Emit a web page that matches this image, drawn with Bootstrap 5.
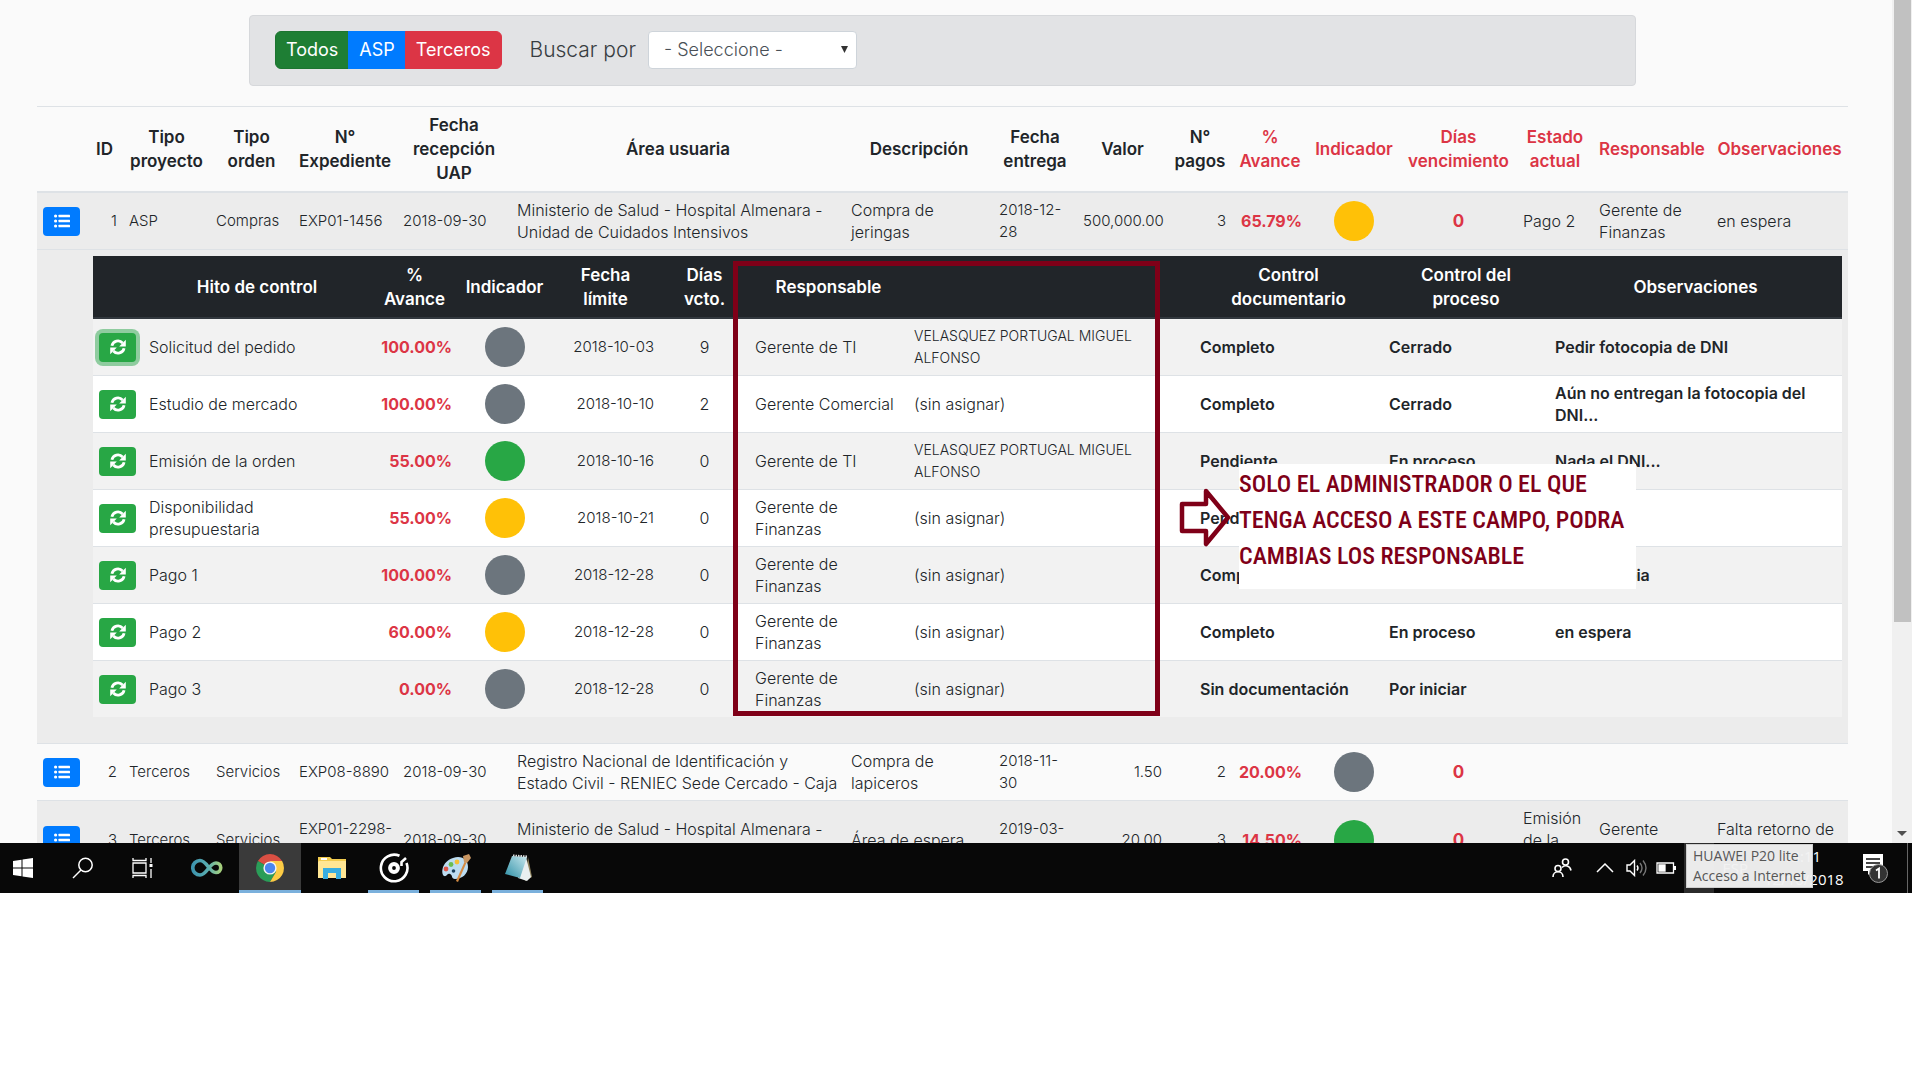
<!DOCTYPE html>
<html lang="es">
<head>
<meta charset="utf-8">
<meta name="viewport" content="width=device-width, initial-scale=1">
<title>Expedientes</title>
<link href="https://cdn.jsdelivr.net/npm/bootstrap@5.3.0/dist/css/bootstrap.min.css" rel="stylesheet">
<script src="https://cdn.jsdelivr.net/npm/bootstrap@5.3.0/dist/js/bootstrap.bundle.min.js"></script>
<style>
  body{font-family:Inter,"Open Sans",sans-serif;font-size:16px;font-weight:300;line-height:22px;color:#212529;background:#fff;padding:0 8px 187px 0}
  .browser{min-height:0;background:#fafafa}
  .page-body{padding:15px 44px 0 37px}
  .filter-bar{max-width:1387px;height:71px;margin-bottom:20px;padding:0 25px 2px;background:#e2e3e5;border:1px solid #d6d8db;border-radius:4px;font-size:21px;color:#383d41}
  .filter-bar .btn{height:38px;padding:0 10px;font-size:18px;line-height:36px;color:#fff;border-width:1px}
  .b-green{background:#1e7e34;border-color:#1c7430}
  .b-blue{background:#007bff;border-color:#007bff}
  .b-red{background:#dc3545;border-color:#dc3545}
  .picker{position:relative;width:209px}
  .picker select{display:block;width:100%;height:38px;padding:0 15px;font-size:18px;font-weight:300;color:#495057;background:#fff;border:1px solid #ced4da;border-radius:4px;appearance:none}
  .picker svg{position:absolute;right:9px;top:15px;pointer-events:none}

  .grid{--bs-table-bg:transparent;width:100%;margin:0;table-layout:fixed;border-collapse:separate;border-spacing:0;white-space:nowrap;color:#212529}
  .grid>:not(caption)>*>*{padding:6px;border:0;border-top:1px solid #dee2e6;box-shadow:none;background:transparent;vertical-align:middle;color:inherit}
  .grid>thead>tr>th{border-bottom:2px solid #dee2e6;font-size:17px;font-weight:600;line-height:24px;text-align:center}
  .grid>thead>tr>th.hot{color:#dc3545}
  .grid>tbody>tr:first-child>td{border-top:0}
  .grid>tbody>tr.shade{background:#ececec}
  .files>tbody>tr>td:nth-child(-n+6),.files>tbody>tr>td:nth-child(9){font-size:15px}
  .grid .num{text-align:right;font-size:15px}
  .grid .mid{text-align:center}
  .grid .pct{text-align:right;font-weight:700;color:#dc3545;font-size:16px}
  .grid .hotnum{text-align:center;font-size:17px;font-weight:700;color:#dc3545}
  .steps{background:#fff}
  .steps>thead>tr{background:#212529;color:#fff}
  .steps>thead>tr>th{border-top-color:#212529;border-bottom-color:#32383e}
  .steps>tbody>tr>td{font-size:16px}
  .steps>tbody>tr:nth-child(odd){background:#f2f2f2}
  .steps .strong{font-weight:600}
  .steps>tbody>tr>td.person{font-size:14px}
  .grid>tbody>tr>td.holder{padding:6px 6px 26px 7px}

  .dot{display:block;width:40px;height:40px;margin:2px auto;border-radius:50%}
  .d-amber{background:#ffc107}.d-grey{background:#6c757d}.d-green{background:#28a745}
  .act{display:flex;align-items:center;justify-content:center;width:37px;height:29px;padding:0;border:0;border-radius:4px;color:#fff}
  .act.go{background:#28a745}
  .act.list{background:#007bff}
  .act.held{box-shadow:0 0 0 4px #8fcc9f}

  .mark-frame{position:absolute;left:640px;top:5px;width:427px;height:455px;border:5px solid #7f0018;pointer-events:none}
  .mark-arrow{position:absolute;left:1086px;top:230px}
  .mark-note{position:absolute;left:1146px;top:208px;width:397px;height:125px;padding-top:2px;background:#fff;color:#7f0018;font:500 24px/36px "Roboto Condensed",Roboto,sans-serif;white-space:nowrap}

  .scroller{width:20px;background:#f0f0f0}
  .thumb{width:17px;flex:0 0 622px;background:#c1c1c1}

  .taskbar{position:relative;height:50px;background:#080808}
  .taskbar::after{content:"";position:absolute;right:4px;top:0;width:1px;height:50px;background:#666}
  .app{display:flex;align-items:center;justify-content:center;width:62px;height:50px;padding:0;background:none;border:0}
  .app.on{background:#3a3a3a;border-bottom:3px solid #7ab0dc;padding-top:3px}
  .app.open{width:51px;margin:0 6px 0 5px;border-bottom:3px solid #7ab0dc;padding-top:3px}
  .tray{color:#fff;font-family:"Open Sans",sans-serif;font-weight:400;font-size:15px}
  .clock{text-align:center;width:76px;line-height:23px}
  .wifi-slot{width:30px;height:50px;background:#2b2b2b}
  .net-tip{position:absolute;right:99px;top:1px;width:127px;height:44px;padding:1px 6px;background:rgba(242,242,242,.97);border:1px solid #cfcfcf;color:#575757;font:400 14px/20px "Open Sans",sans-serif;white-space:nowrap}
</style>
</head>
<body class="d-flex flex-column vh-100 overflow-hidden">

<svg width="0" height="0" class="position-absolute" aria-hidden="true">
  <symbol id="i-sync" viewBox="0 0 16 16"><g fill="none" stroke="currentColor" stroke-width="2.800"><path d="M1.900 6.800A6.200 6.200 0 0 1 12.600 4M14.100 9.200A6.200 6.200 0 0 1 3.400 12"/></g><path fill="currentColor" d="M15.800 .8v6.600H9.200zM.2 15.200V8.600h6.600z"/></symbol>
  <symbol id="i-list" viewBox="0 0 16 14"><g fill="currentColor"><circle cx="1.600" cy="2" r="1.600"/><circle cx="1.600" cy="7" r="1.600"/><circle cx="1.600" cy="12" r="1.600"/><rect x="4.500" y=".7" width="11.500" height="2.600" rx=".5"/><rect x="4.500" y="5.700" width="11.500" height="2.600" rx=".5"/><rect x="4.500" y="10.700" width="11.500" height="2.600" rx=".5"/></g></symbol>
</svg>

<div class="browser d-flex flex-grow-1 overflow-hidden">
  <main class="page-body flex-grow-1">
    <div class="filter-bar d-flex align-items-center mx-auto">
      <div class="btn-group" role="group" aria-label="Tipo de proyecto">
        <button type="button" class="btn b-green">Todos</button>
        <button type="button" class="btn b-blue">ASP</button>
        <button type="button" class="btn b-red">Terceros</button>
      </div>
      <label for="criterio" class="ms-4 ps-1 me-2 pe-1">Buscar por</label>
      <div class="picker">
        <select id="criterio"><option>- Seleccione -</option></select>
        <svg width="7" height="8" viewBox="0 0 7 8"><path d="M0 0h7L3.500 7z" fill="#333"/></svg>
      </div>
    </div>

    <table class="table grid files">
      <colgroup><col style="width:49px"><col style="width:37px"><col style="width:87px"><col style="width:83px"><col style="width:104px"><col style="width:114px"><col style="width:334px"><col style="width:148px"><col style="width:84px"><col style="width:91px"><col style="width:64px"><col style="width:76px"><col style="width:92px"><col style="width:117px"><col style="width:76px"><col style="width:118px"><col style="width:137px"></colgroup>
      <thead><tr>
        <th></th><th>ID</th><th>Tipo<br>proyecto</th><th>Tipo<br>orden</th><th>N°<br>Expediente</th><th>Fecha<br>recepción<br>UAP</th><th>Área usuaria</th><th>Descripción</th><th>Fecha<br>entrega</th><th>Valor</th><th>N°<br>pagos</th>
        <th class="hot">%<br>Avance</th><th class="hot">Indicador</th><th class="hot">Días<br>vencimiento</th><th class="hot">Estado<br>actual</th><th class="hot">Responsable</th><th class="hot">Observaciones</th>
      </tr></thead>
      <tbody>
        <tr class="shade">
          <td><button type="button" class="act list" aria-label="Detalle"><svg width="16" height="14"><use href="#i-list"/></svg></button></td>
          <td class="num">1</td><td>ASP</td><td>Compras</td><td>EXP01-1456</td><td>2018-09-30</td>
          <td>Ministerio de Salud - Hospital Almenara -<br>Unidad de Cuidados Intensivos</td><td>Compra de<br>jeringas</td><td>2018-12-<br>28</td>
          <td class="num">500,000.00</td><td class="num">3</td><td class="pct">65.79%</td><td><span class="dot d-amber"></span></td><td class="hotnum">0</td><td>Pago 2</td><td>Gerente de<br>Finanzas</td><td>en espera</td>
        </tr>
        <tr class="shade">
          <td></td>
          <td colspan="16" class="holder"><div class="position-relative">
            <table class="table grid steps">
              <colgroup><col style="width:50px"><col style="width:228px"><col style="width:87px"><col style="width:93px"><col style="width:109px"><col style="width:89px"><col style="width:159px"><col style="width:286px"><col style="width:189px"><col style="width:166px"><col style="width:293px"></colgroup>
              <thead><tr><th></th><th>Hito de control</th><th>%<br>Avance</th><th>Indicador</th><th>Fecha<br>límite</th><th>Días<br>vcto.</th><th>Responsable</th><th></th><th>Control<br>documentario</th><th>Control del<br>proceso</th><th>Observaciones</th></tr></thead>
              <tbody>
                <tr><td><button type="button" class="act go held" aria-label="Actualizar"><svg width="16" height="16"><use href="#i-sync"/></svg></button></td><td>Solicitud del pedido</td><td class="pct">100.00%</td><td><span class="dot d-grey"></span></td><td class="num">2018-10-03</td><td class="mid">9</td><td>Gerente de TI</td><td class="person">VELASQUEZ PORTUGAL MIGUEL<br>ALFONSO</td><td class="strong">Completo</td><td class="strong">Cerrado</td><td class="strong">Pedir fotocopia de DNI</td></tr>
                <tr><td><button type="button" class="act go" aria-label="Actualizar"><svg width="16" height="16"><use href="#i-sync"/></svg></button></td><td>Estudio de mercado</td><td class="pct">100.00%</td><td><span class="dot d-grey"></span></td><td class="num">2018-10-10</td><td class="mid">2</td><td>Gerente Comercial</td><td>(sin asignar)</td><td class="strong">Completo</td><td class="strong">Cerrado</td><td class="strong">Aún no entregan la fotocopia del<br>DNI...</td></tr>
                <tr><td><button type="button" class="act go" aria-label="Actualizar"><svg width="16" height="16"><use href="#i-sync"/></svg></button></td><td>Emisión de la orden</td><td class="pct">55.00%</td><td><span class="dot d-green"></span></td><td class="num">2018-10-16</td><td class="mid">0</td><td>Gerente de TI</td><td class="person">VELASQUEZ PORTUGAL MIGUEL<br>ALFONSO</td><td class="strong">Pendiente</td><td class="strong">En proceso</td><td class="strong">Nada el DNI...</td></tr>
                <tr><td><button type="button" class="act go" aria-label="Actualizar"><svg width="16" height="16"><use href="#i-sync"/></svg></button></td><td>Disponibilidad<br>presupuestaria</td><td class="pct">55.00%</td><td><span class="dot d-amber"></span></td><td class="num">2018-10-21</td><td class="mid">0</td><td>Gerente de<br>Finanzas</td><td>(sin asignar)</td><td class="strong">Pendiente</td><td></td><td></td></tr>
                <tr><td><button type="button" class="act go" aria-label="Actualizar"><svg width="16" height="16"><use href="#i-sync"/></svg></button></td><td>Pago 1</td><td class="pct">100.00%</td><td><span class="dot d-grey"></span></td><td class="num">2018-12-28</td><td class="mid">0</td><td>Gerente de<br>Finanzas</td><td>(sin asignar)</td><td class="strong">Completo</td><td></td><td class="strong">Enviar copia</td></tr>
                <tr><td><button type="button" class="act go" aria-label="Actualizar"><svg width="16" height="16"><use href="#i-sync"/></svg></button></td><td>Pago 2</td><td class="pct">60.00%</td><td><span class="dot d-amber"></span></td><td class="num">2018-12-28</td><td class="mid">0</td><td>Gerente de<br>Finanzas</td><td>(sin asignar)</td><td class="strong">Completo</td><td class="strong">En proceso</td><td class="strong">en espera</td></tr>
                <tr><td><button type="button" class="act go" aria-label="Actualizar"><svg width="16" height="16"><use href="#i-sync"/></svg></button></td><td>Pago 3</td><td class="pct">0.00%</td><td><span class="dot d-grey"></span></td><td class="num">2018-12-28</td><td class="mid">0</td><td>Gerente de<br>Finanzas</td><td>(sin asignar)</td><td class="strong">Sin documentación</td><td class="strong">Por iniciar</td><td></td></tr>
              </tbody>
            </table>
            <div class="mark-frame"></div>
            <div class="mark-note">SOLO EL ADMINISTRADOR O EL QUE<br>TENGA ACCESO A ESTE CAMPO, PODRA<br>CAMBIAS LOS RESPONSABLE</div>
            <svg class="mark-arrow" width="54" height="63" viewBox="0 0 54 63"><path d="M3 18h24V5l22 26.500L27 58V45H3z" fill="none" stroke="#7f0018" stroke-width="4.500" stroke-linejoin="round"/></svg>
          </div></td>
        </tr>
        <tr>
          <td><button type="button" class="act list" aria-label="Detalle"><svg width="16" height="14"><use href="#i-list"/></svg></button></td>
          <td class="num">2</td><td>Terceros</td><td>Servicios</td><td>EXP08-8890</td><td>2018-09-30</td>
          <td>Registro Nacional de Identificación y<br>Estado Civil - RENIEC Sede Cercado - Caja</td><td>Compra de<br>lapiceros</td><td>2018-11-<br>30</td>
          <td class="num">1.50</td><td class="num">2</td><td class="pct">20.00%</td><td><span class="dot d-grey"></span></td><td class="hotnum">0</td><td></td><td></td><td></td>
        </tr>
        <tr class="shade">
          <td><button type="button" class="act list" aria-label="Detalle"><svg width="16" height="14"><use href="#i-list"/></svg></button></td>
          <td class="num">3</td><td>Terceros</td><td>Servicios</td><td>EXP01-2298-<br>&nbsp;</td><td>2018-09-30</td>
          <td>Ministerio de Salud - Hospital Almenara -<br>&nbsp;</td><td>Área de espera</td><td>2019-03-<br>&nbsp;</td>
          <td class="num">20.00</td><td class="num">3</td><td class="pct">14.50%</td><td><span class="dot d-green"></span></td><td class="hotnum">0</td><td>Emisión<br>de la<br>&nbsp;</td><td>Gerente<br>&nbsp;</td><td>Falta retorno de<br>&nbsp;</td>
        </tr>
      </tbody>
    </table>
  </main>
  <div class="scroller d-flex flex-column align-items-center flex-shrink-0">
    <div class="thumb"></div>
    <svg class="mt-auto mb-1" width="10" height="9" viewBox="0 0 10 9"><path d="M0 1h10L5 6z" fill="#505050"/></svg>
  </div>
</div>

<footer class="taskbar d-flex align-items-center flex-shrink-0">
  <button type="button" class="app" aria-label="Inicio" style="width:46px"><svg width="20" height="20" viewBox="0 0 20 20" fill="#fff"><path d="M0 3l8.500-1.200v7.700H0zM9.500 1.600L20 0v9.500H9.500zM0 10.500h8.500v7.700L0 17zM9.500 10.500H20V20L9.500 18.400z"/></svg></button>
  <button type="button" class="app ms-1" aria-label="Buscar" style="width:66px"><svg width="22" height="22" viewBox="0 0 22 22" fill="none" stroke="#fff" stroke-width="1.500"><circle cx="13.500" cy="8" r="6.700"/><path d="M9 13L1 21"/></svg></button>
  <button type="button" class="app" aria-label="Vista de tareas" style="width:54px"><svg width="22" height="20" viewBox="0 0 22 20" fill="none" stroke="#fff" stroke-width="1.300"><path d="M1 5h13v10H1zM1 0v2.500h13V0M1 20v-2.500h13V20M19 0v5M19 11v9"/><path d="M17.500 6h3v3h-3z" fill="#fff" stroke="none"/></svg></button>
  <button type="button" class="app ms-1 me-1 ps-1" aria-label="Nube" style="width:61px"><svg width="32" height="20" viewBox="0 0 32 20"><defs><linearGradient id="inf" x1="0" x2="1"><stop offset="0" stop-color="#3d94ae"/><stop offset=".55" stop-color="#5aaeb0"/><stop offset="1" stop-color="#a5cf7c"/></linearGradient></defs><path d="M9 2.500c7 0 9 12 16 12a4.700 4.700 0 0 0 0-9.500c-7 0-9 12-16 12A7.200 7.200 0 0 1 9 2.500z" fill="none" stroke="url(#inf)" stroke-width="3.600"/></svg></button>
  <button type="button" class="app on" aria-label="Chrome"><svg width="28" height="28" viewBox="0 0 28 28"><path d="M14 14L1.900 7A14 14 0 0 1 26.100 7z" fill="#d94f43"/><path d="M14 14L1.900 7A14 14 0 0 0 14 28l6.200-10.500z" fill="#2a9d58"/><path d="M26.100 7H14l6.200 10.500L14 28A14 14 0 0 0 26.100 7z" fill="#fccb45"/><circle cx="14" cy="14" r="6.600" fill="#f4f4f4"/><circle cx="14" cy="14" r="5.200" fill="#4a86ee"/></svg></button>
  <button type="button" class="app" aria-label="Explorador"><svg width="28" height="24" viewBox="0 0 28 24"><path d="M0 1h12l2 2h14v19H0z" fill="#f2cc4f"/><path d="M1 5h27v17H0V6z" fill="#ffe694"/><path d="M3 2h6v2H3z" fill="#fff"/><path d="M5 12h18v11h-5v-6h-8v6H5z" fill="#37ade0"/></svg></button>
  <button type="button" class="app open" aria-label="Groove"><svg width="30" height="30" viewBox="0 0 30 30" fill="none" stroke="#fff"><path d="M20.500 2.800A13.300 13.300 0 1 0 27.500 10" stroke-width="2.600"/><path d="M22.500 13V9l4.500-4" stroke-width="2.600"/><circle cx="15" cy="15" r="3.900" stroke-width="4"/></svg></button>
  <button type="button" class="app open" aria-label="Paint"><svg width="30" height="28" viewBox="0 0 30 28"><path d="M12 4c9-3 15 2 15 9s-6 12-13 12c-4 0-2-4-5-5s-3 3-6 2C0 20 0 8 12 4z" fill="#bcdcf1"/><circle cx="5" cy="15" r="2.400" fill="#df5648"/><circle cx="10" cy="10.500" r="2.400" fill="#69bd52"/><circle cx="16" cy="8" r="2.400" fill="#f4bf37"/><circle cx="12.500" cy="17" r="1.800" fill="#19405e"/><path d="M23.500 8l2 .5L17 28l-2-1z" fill="#d38a43"/><path d="M22 2l6-2 2 4-4 5-3-1z" fill="#c99662"/></svg></button>
  <button type="button" class="app open" aria-label="Bloc de notas"><svg width="28" height="28" viewBox="0 0 28 28"><defs><linearGradient id="pad" x1="0" y1="1" x2="1" y2="0"><stop offset="0" stop-color="#2c8fa6"/><stop offset="1" stop-color="#c9e8ee"/></linearGradient></defs><path d="M24 3l4 20-7 4z" fill="#8d815c"/><path d="M22 3l5 20-4 4-9-3z" fill="#e9eff0"/><path d="M8 2l15 1-7 21-15-4z" fill="url(#pad)"/><path d="M9 1.500l15 1" stroke="#ddd" stroke-width="2" stroke-dasharray="1.500 1"/></svg></button>

  <div class="tray d-flex align-items-center ms-auto">
    <svg class="me-4" width="20" height="20" viewBox="0 0 20 20" fill="none" stroke="#fff" stroke-width="1.600"><circle cx="13.500" cy="4" r="3"/><circle cx="6" cy="10.500" r="3"/><path d="M1 19c0-7 10-7 10 0M10 9.500c3-3 8-2 9 3"/></svg>
    <svg class="me-2" width="18" height="10" viewBox="0 0 18 10" fill="none" stroke="#fff" stroke-width="1.500"><path d="M1 9l8-8 8 8"/></svg>
    <svg class="ms-1 me-2" width="22" height="18" viewBox="0 0 22 18" fill="none" stroke="#fff" stroke-width="1.400"><path d="M1 6h3l4.500-4.500v15L4 12H1z"/><path d="M11 6.500q2 2.500 0 5"/><path d="M14 4q4 5 0 10M17 1.500q6 7.500 0 15" stroke="#777"/></svg>
    <svg class="me-2" width="20" height="12" viewBox="0 0 20 12" fill="none" stroke="#fff" stroke-width="1.300"><path d="M1 1h16.500v10H1z"/><path d="M3 3h6v6H3z" fill="#fff"/><path d="M19 4v4" stroke-width="2"/></svg>
    <div class="wifi-slot"></div>
    <span class="ps-2 me-3">ESP</span>
    <div class="clock">13:11<br>12/10/2018</div>
    <svg class="ms-3 me-4" width="32" height="30" viewBox="0 0 32 30"><path d="M7 1h20v17H16l-4 4v-4H7z" fill="#fff"/><path d="M10 6h14M10 10h14M10 14h9" stroke="#080808" stroke-width="1.600"/><circle cx="22" cy="20" r="9" fill="#333" stroke="#999" transform="translate(.5 .5)"/><path d="M20 17.500l3-2v10" fill="none" stroke="#fff" stroke-width="1.800"/></svg>
  </div>
  <div class="net-tip" role="tooltip">HUAWEI P20 lite<br>Acceso a Internet</div>
</footer>
</body>
</html>
